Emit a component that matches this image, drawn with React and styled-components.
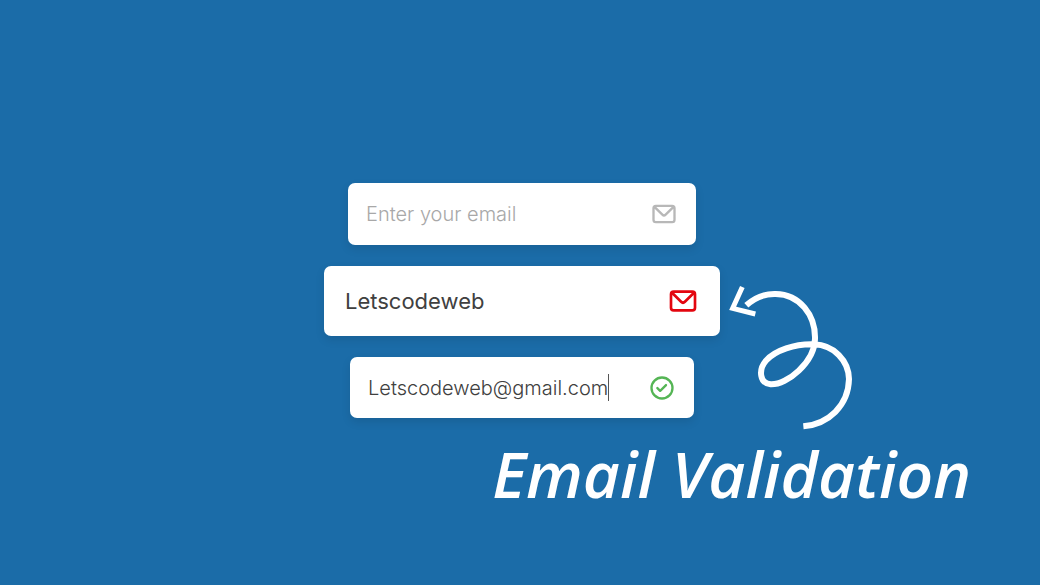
import React from "react";
import styled, { createGlobalStyle } from "styled-components";

const GlobalStyle = createGlobalStyle`
  * { box-sizing: border-box; }
  body { margin: 0; background: #1b6ca8; }
`;

const Page = styled.main`
  min-height: 100vh;
  padding-top: 183px;
  background: #1b6ca8;
  font-family: Inter, "Open Sans", sans-serif;
  overflow: hidden;
`;

const Showcase = styled.div`
  display: grid;
  grid-template-columns: 1fr auto 1fr;
  padding-left: 4px;
`;

const Fields = styled.form`
  grid-column: 2;
  display: flex;
  flex-direction: column;
  align-items: center;
  gap: 21px;
`;

const sizes = {
  small: { width: 344, height: 61, pad: 18, font: 20, weight: 300, icon: 28 },
  medium: { width: 348, height: 62, pad: 18, font: 20, weight: 300, icon: 28 },
  large: { width: 396, height: 70, pad: 21, font: 22, weight: 400, icon: 32 },
};

const Field = styled.label`
  display: flex;
  align-items: center;
  width: ${(p) => sizes[p.$size].width}px;
  height: ${(p) => sizes[p.$size].height}px;
  padding: 0 ${(p) => sizes[p.$size].pad}px;
  border-radius: 7px;
  background: #fff;
  box-shadow: 0 4px 10px rgba(0, 0, 0, 0.1);
  font-size: ${(p) => sizes[p.$size].font}px;
  font-weight: ${(p) => sizes[p.$size].weight};
`;

const EmailInput = styled.input`
  ${(p) => (p.$hug ? "field-sizing: content;" : "flex: 1;")}
  min-width: 0;
  padding: 0;
  border: 0;
  outline: 0;
  background: transparent;
  color: ${(p) => p.$color || "#404040"};
  font: inherit;
  &::placeholder { color: #a8a8a8; opacity: 1; }
`;

const Caret = styled.span`
  width: 1px;
  height: 27px;
  background: #555;
`;

const Icon = styled.svg`
  flex: none;
  margin-left: auto;
  width: ${(p) => p.$size}px;
  height: ${(p) => p.$size}px;
  fill: ${(p) => p.$color};
`;

const Arrow = styled.svg`
  width: 150px;
  height: 165px;
  margin-top: 92px;
  fill: none;
  stroke: #fff;
`;

const Title = styled.h1`
  margin: 0 69px 0 0;
  text-align: right;
  color: #fff;
  font: italic 600 64px/68px "Open Sans", sans-serif;
`;

const MAIL =
  "M19,4H5A3,3,0,0,0,2,7V17a3,3,0,0,0,3,3H19a3,3,0,0,0,3-3V7A3,3,0,0,0,19,4Zm-.41,2-5.88,5.88a1,1,0,0,1-1.42,0L5.41,6ZM20,17a1,1,0,0,1-1,1H5a1,1,0,0,1-1-1V7.41l5.88,5.88a3,3,0,0,0,4.24,0L20,7.41Z";
const CHECK =
  "M14.72,8.79l-4.29,4.3L8.78,11.44a1,1,0,1,0-1.41,1.41l2.35,2.36a1,1,0,0,0,.71.29,1,1,0,0,0,.7-.29l5-5a1,1,0,0,0,0-1.42A1,1,0,0,0,14.72,8.79ZM12,2A10,10,0,1,0,22,12,10,10,0,0,0,12,2Zm0,18a8,8,0,1,1,8-8A8,8,0,0,1,12,20Z";

function EmailField({ size, value, color, iconColor, icon = MAIL, caret }) {
  return (
    <Field $size={size}>
      <EmailInput
        type="text"
        aria-label="Email"
        placeholder="Enter your email"
        defaultValue={value}
        spellCheck={false}
        $color={color}
        $hug={caret}
      />
      {caret && <Caret />}
      <Icon viewBox="0 0 24 24" $size={sizes[size].icon} $color={iconColor} aria-hidden="true">
        <path d={icon} />
      </Icon>
    </Field>
  );
}

export default function App() {
  return (
    <Page>
      <GlobalStyle />
      <Showcase>
        <Fields>
          <EmailField size="medium" iconColor="#b8b8b8" />
          <EmailField size="large" value="Letscodeweb" iconColor="#e3060f" />
          <EmailField
            size="small"
            value="Letscodeweb@gmail.com"
            color="#404040"
            iconColor="#55b555"
            icon={CHECK}
            caret
          />
        </Fields>
        <Arrow viewBox="0 0 450 495" aria-hidden="true">
          <path strokeWidth="15" d="M67 36L38 100L106 117" />
          <path
            strokeWidth="18"
            d="M79 91C103 69 135 56 167 57C239 58 287 120 285 192C283 262 202 330 152 328C118 324 115 284 138 257C165 226 225 206 282 208C342 210 386 257 387 312C385 392 326 447 250 454"
          />
        </Arrow>
      </Showcase>
      <Title>Email Validation</Title>
    </Page>
  );
}
